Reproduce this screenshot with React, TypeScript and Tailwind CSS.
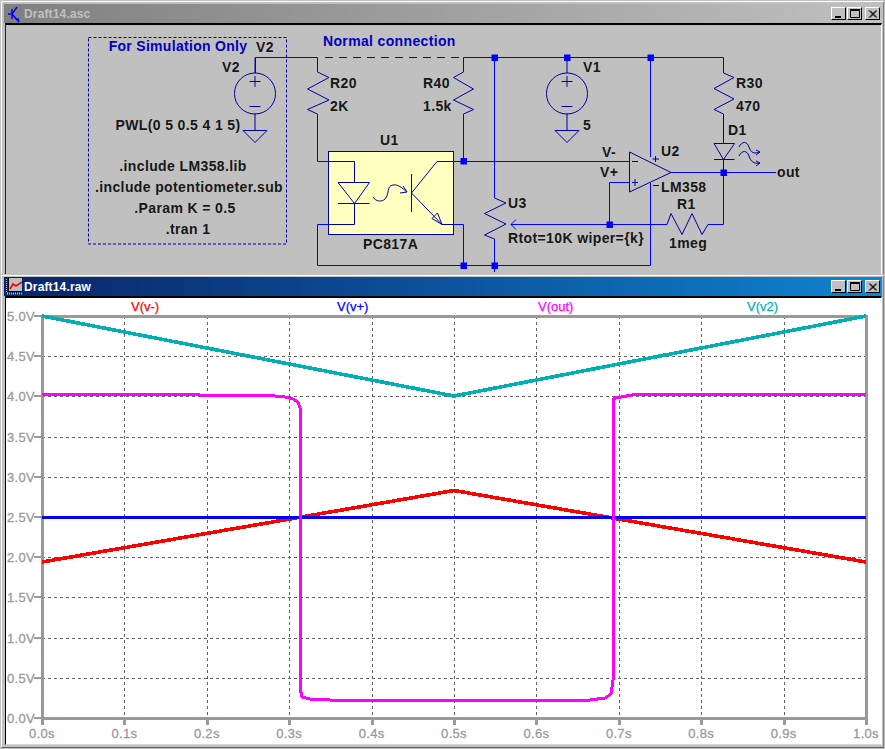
import React from "react";

const WIRE = "#0000ff";
const SYM = "#0000a0";
const FONT = "'Liberation Sans', Arial, sans-serif";

function Zig({ points }: { points: string }) {
  return <polyline points={points} fill="none" stroke={SYM} strokeWidth={1} />;
}

function Dot({ x, y }: { x: number; y: number }) {
  return <rect x={x - 3} y={y - 3} width={6.5} height={6.5} fill="#0000ff" />;
}

function Source({ x, y }: { x: number; y: number }) {
  return (
    <g fill="none" stroke={SYM} strokeWidth={1}>
      <circle cx={x} cy={y} r={20.5} />
      <path d={`M${x} ${y - 36}V${y - 20.5}M${x} ${y + 20}V${y + 37}M${x - 12} ${y + 37}H${x + 12}L${x} ${y + 49}Z`} />
      <path d={`M${x - 5.5} ${y - 12}H${x + 5.5}M${x} ${y - 17.5}V${y - 6.5}M${x - 5.5} ${y + 13}H${x + 5.5}`} />
    </g>
  );
}

function L({ x, y, t, anchor }: { x: number; y: number; t: string; anchor?: "middle" }) {
  return (
    <text x={x} y={y} textAnchor={anchor} fontFamily={FONT} fontWeight={700} fontSize={14} letterSpacing={0.38} fill="#000000" fillOpacity={0.9}>
      {t}
    </text>
  );
}

function Schematic() {
  return (
    <svg className="block w-full h-full" viewBox="6 25 875 249">
      <rect x={88.5} y={37.5} width={198} height={206.5} fill="none" stroke={SYM} strokeWidth={1} strokeDasharray="3 2" />

      <path
        d="M255.5 57.5H317.5M463.5 57.5H723.5V73M463.5 161.5H629M437 161.5H463.5M494.5 57.5V198M494.5 239V272M463.5 114V161.5M463.5 224.5V265.5M442 224.5H463.5M317.5 265.5H650.5V183M650.5 57.5V157M609.5 224.5V182.5H629M524 224.5H667M708 224.5H723.5V172M671 172.5H776M354.5 224.5H317.5V265.5M354.5 161.5H317.5V114M317.5 57.5V72M255.5 57.5V73M463.5 57.5V72"
        fill="none"
        stroke={WIRE}
        strokeWidth={1}
      />
      <path d="M325 57.5H463.5" fill="none" stroke={WIRE} strokeWidth={1} strokeDasharray="8 6" />

      <Source x={255} y={93.5} />
      <Source x={567} y={93.5} />

      <Zig points="317.5,72 329,77.5 307.5,89 329,100 307.5,109.5 317.5,114" />
      <Zig points="463.5,72 453.5,77.5 473.5,89 453.5,100 473.5,109.5 463.5,114" />
      <Zig points="723.5,73 734,77.5 714,88.5 734,99 714,109.5 723.5,114 723.5,143" />
      <Zig points="494.5,198 506,203 484.5,213.5 506,224 484.5,235 494.5,239" />
      <Zig points="667,224.5 671,213.5 682,234.5 692,213.5 702,234.5 708,224.5" />

      <path d="M511 224.5L516 219.5M511 224.5L516 229.5M511 224.5H524" fill="none" stroke={WIRE} strokeWidth={1} />

      <rect x={328.5} y={151.5} width={125} height={83} fill="#ffffc0" stroke={SYM} strokeWidth={1} />
      <g fill="none" stroke={SYM} strokeWidth={1}>
        <path d="M328.5 161.5H354.5V182.5M338 182.5H369.5L354.5 203.5L338 182.5M338 203.5H369.5M354.5 203.5V224.5H328.5" />
        <path d="M373 197C376 202 382 202 385 199C390 194 386 186 393 185C398 184 402 188 407 192M407 192L400 193M407 192L403 186" />
        <path d="M411.5 174V212M411.5 193L437 161.5H453.5M411.5 193L442 224.5H453.5M442 224.5L432 218.5L437.5 213Z" />
      </g>

      <g fill="none" stroke={SYM} strokeWidth={1}>
        <path d="M629.5 152V192L671 172.5Z" />
        <path d="M632 161.5H638M632 182.5H638M635 179V186M652.5 159H659M655.5 156V162M653 185.5H659" />
        <path d="M714 143.5H734.5L723.5 159.5L714 143.5M714 159.5H734.5M723.5 159.5V172" />
        <path d="M739 147C742 141 747 141 749 147S754 154 760 152M760 152L756 150M760 152L756 155" />
        <path d="M739 156C742 150 747 150 749 156S754 164 760 163M760 163L756 161M760 163L756 166" />
      </g>

      <Dot x={494.5} y={57.5} />
      <Dot x={567} y={57.5} />
      <Dot x={650.5} y={57.5} />
      <Dot x={463.5} y={161} />
      <Dot x={463.5} y={265.5} />
      <Dot x={494.5} y={265.5} />
      <Dot x={609.5} y={224.5} />
      <Dot x={723.5} y={172.5} />

      <text x={178} y={51} textAnchor="middle" fontFamily={FONT} fontWeight={700} fontSize={14} letterSpacing={0.3} fill="#0000c0">For Simulation Only</text>
      <text x={323} y={46} fontFamily={FONT} fontWeight={700} fontSize={14} letterSpacing={0.35} fill="#0000c0">Normal connection</text>

      <L x={256} y={52} t="V2" />
      <L x={222} y={72} t="V2" />
      <L x={178} y={130} t="PWL(0 5 0.5 4 1 5)" anchor="middle" />
      <L x={183} y={171} t=".include LM358.lib" anchor="middle" />
      <L x={189} y={192} t=".include potentiometer.sub" anchor="middle" />
      <L x={185} y={213} t=".Param K = 0.5" anchor="middle" />
      <L x={188} y={234} t=".tran 1" anchor="middle" />
      <L x={330} y={88} t="R20" />
      <L x={330} y={111} t="2K" />
      <L x={423} y={88} t="R40" />
      <L x={423} y={111} t="1.5k" />
      <L x={380} y={145} t="U1" />
      <L x={363} y={249} t="PC817A" />
      <L x={508} y={208} t="U3" />
      <L x={508} y={243} t="Rtot=10K wiper={k}" />
      <L x={583} y={72} t="V1" />
      <L x={583} y={130} t="5" />
      <L x={602} y={157} t="V-" />
      <L x={600} y={177} t="V+" />
      <L x={661} y={156} t="U2" />
      <L x={661} y={192} t="LM358" />
      <L x={677} y={209} t="R1" />
      <L x={669} y={248} t="1meg" />
      <L x={736} y={88} t="R30" />
      <L x={736} y={111} t="470" />
      <L x={728} y={135} t="D1" />
      <L x={777} y={177} t="out" />
    </svg>
  );
}

const X0 = 42;
const X1 = 866;
const Y0 = 718;
const Y1 = 316;
const xAt = (i: number) => X0 + ((X1 - X0) * i) / 10;
const yAt = (i: number) => Y0 - ((Y0 - Y1) * i) / 10;
const AXIS = "#9c9898";

function Plot() {
  const idx = [0, 1, 2, 3, 4, 5, 6, 7, 8, 9, 10];
  const xl = ["0.0s", "0.1s", "0.2s", "0.3s", "0.4s", "0.5s", "0.6s", "0.7s", "0.8s", "0.9s", "1.0s"];
  const yl = ["0.0V", "0.5V", "1.0V", "1.5V", "2.0V", "2.5V", "3.0V", "3.5V", "4.0V", "4.5V", "5.0V"];
  return (
    <svg className="block w-full h-full" viewBox="6 298 875 446">
      <g stroke="#606060" strokeWidth={1} strokeDasharray="3 3" fill="none" shapeRendering="crispEdges">
        {idx.slice(1, 10).map((i) => (
          <path key={i} d={`M${Math.round(xAt(i)) + 0.5} ${Y1}V${Y0}`} />
        ))}
        {idx.slice(1, 10).map((i) => (
          <path key={i} d={`M${X0} ${Math.round(yAt(i)) + 0.5}H${X1}`} />
        ))}
      </g>
      <rect x={X0} y={Y1} width={X1 - X0} height={Y0 - Y1} fill="none" stroke={AXIS} strokeWidth={3} shapeRendering="crispEdges" />
      <g stroke={AXIS} strokeWidth={2} fill="none" shapeRendering="crispEdges">
        {idx.map((i) => (
          <path key={i} d={`M${Math.round(xAt(i))} ${Y0}V725`} strokeWidth={3} />
        ))}
        {idx.map((i) => (
          <path key={i} d={`M34 ${Math.round(yAt(i))}H${X0}`} />
        ))}
      </g>
      <g fontFamily={FONT} fontSize={13} fill={AXIS} letterSpacing={0.3} stroke={AXIS} strokeWidth={0.3}>
        {idx.map((i) => (
          <text key={i} x={7} y={Math.round(yAt(i)) + 5}>{yl[i]}</text>
        ))}
        {idx.map((i) => (
          <text key={i} x={xAt(i)} y={738} textAnchor="middle">{xl[i]}</text>
        ))}
      </g>
      <g fill="none" strokeWidth={3} shapeRendering="crispEdges">
        <polyline stroke="#ff0000" strokeWidth={3.6} points="42,562 454,490.5 866,562" />
        <polyline stroke="#0000ff" points="42,517.5 866,517.5" />
        <polyline stroke="#00b0b0" strokeWidth={3.6} points="42,316 454,396 866,316" />
        <polyline
          stroke="#ff00ff"
          strokeLinejoin="round"
          points="42,394.5 200,395 270,395.5 285,397 293,399 298,402 300,408 300.5,690 302,697 310,699 330,700 590,700 605,698 611,694 613,680 613,400 615,398 621,397 632,395 660,394.5 866,394.5"
        />
      </g>
      <g fontFamily={FONT} fontSize={13} strokeWidth={0.25}>
        <text x={131} y={311} fill="#ff0000" stroke="#ff0000">V(v-)</text>
        <text x={337} y={311} fill="#0000ff" stroke="#0000ff">V(v+)</text>
        <text x={538} y={311} fill="#ff00ff" stroke="#ff00ff">V(out)</text>
        <text x={747} y={311} fill="#00b0b0" stroke="#00b0b0">V(v2)</text>
      </g>
    </svg>
  );
}

function WinButtons() {
  const btn =
    "w-[15px] h-[13px] bg-[#c0c0c0] border border-t-white border-l-white border-r-black border-b-black flex items-center justify-center";
  return (
    <div className="flex items-center">
      <div className={btn}>
        <svg width="9" height="9" viewBox="0 0 9 9"><rect x="1" y="7" width="6" height="2" fill="#000" /></svg>
      </div>
      <div className={`${btn} ml-[1px]`}>
        <svg width="10" height="9" viewBox="0 0 10 9"><path d="M0.5 1.5H9.5V8.5H0.5ZM0 0.5H10" fill="none" stroke="#000" /></svg>
      </div>
      <div className={`${btn} ml-[3px]`}>
        <svg width="9" height="8" viewBox="0 0 9 8"><path d="M1 0.5L8 7.5M2 0.5L9 7.5M8 0.5L1 7.5M9 0.5L2 7.5" fill="none" stroke="#000" /></svg>
      </div>
    </div>
  );
}

function SchematicIcon() {
  return (
    <svg width="14" height="18" viewBox="0 0 14 18">
      <path d="M4 4V14M4 9H0M4 9L9 2M4 9L11 17" fill="none" stroke="#0000ff" strokeWidth={1.5} />
      <path d="M7 14L10.5 13L11.5 17Z" fill="#0000ff" />
    </svg>
  );
}

function PlotIcon() {
  return (
    <svg width="16" height="17" viewBox="0 0 16 17">
      <rect x="3" y="0" width="13" height="13" fill="#c0c0c0" />
      <path d="M2.5 0V13.5H16" fill="none" stroke="#000" strokeWidth={1} />
      <path d="M4 11L7 6L10 8L13 6L16 4" fill="none" stroke="#ff0000" strokeWidth={1.6} />
      <path d="M1 15.5H16" fill="none" stroke="#c0c0c0" strokeWidth={2} strokeDasharray="1 1" />
      <path d="M0.5 1V15" fill="none" stroke="#c0c0c0" strokeWidth={1} strokeDasharray="1 1" />
    </svg>
  );
}

export default function App() {
  return (
    <div className="w-[885px] h-[749px] bg-[#c0c0c0] flex flex-col overflow-hidden" style={{ fontFamily: FONT }}>
      <div className="h-[274px] flex flex-col pt-[1px] pl-[1px] pr-[1px]">
        <div className="flex-1 min-h-0 flex flex-col border-t border-l border-t-white border-l-white border-r border-r-[#808080] pt-[2px] pl-[2px] pr-[1px]">
          <div className="h-[19px] shrink-0 flex items-center justify-between pl-[4px] pr-[2px] bg-gradient-to-r from-[#808080] to-[#c0c0c0]">
            <div className="flex items-center gap-[2px]">
              <SchematicIcon />
              <span className="text-[12px] font-bold tracking-[0.15px] text-[#c0c0c0]">Draft14.asc</span>
            </div>
            <WinButtons />
          </div>
          <div className="flex-1 min-h-0 ml-[1px] border-t-2 border-l border-r border-t-black border-l-[#202020] border-r-white bg-[#c0c0c0]">
            <Schematic />
          </div>
        </div>
      </div>
      <div className="flex-1 min-h-0 flex flex-col pt-[1px] pl-[1px] pr-[1px] pb-[1px]">
        <div className="flex-1 min-h-0 flex flex-col border-t border-l border-t-white border-l-white border-r border-b border-r-[#808080] border-b-[#606060] pt-[1px] pl-[2px] pr-[1px]">
          <div className="h-[19px] shrink-0 flex items-center justify-between pl-[2px] pr-[2px] bg-gradient-to-r from-[#0a246a] to-[#1084d0]">
            <div className="flex items-center gap-[2px]">
              <PlotIcon />
              <span className="text-[12px] font-bold tracking-[0.15px] text-white">Draft14.raw</span>
            </div>
            <WinButtons />
          </div>
          <div className="flex-1 min-h-0 ml-[1px] mb-[2px] border-t-2 border-l border-r border-b border-t-black border-l-black border-r-white border-b-[#d8d8d8] bg-white">
            <Plot />
          </div>
        </div>
      </div>
    </div>
  );
}
